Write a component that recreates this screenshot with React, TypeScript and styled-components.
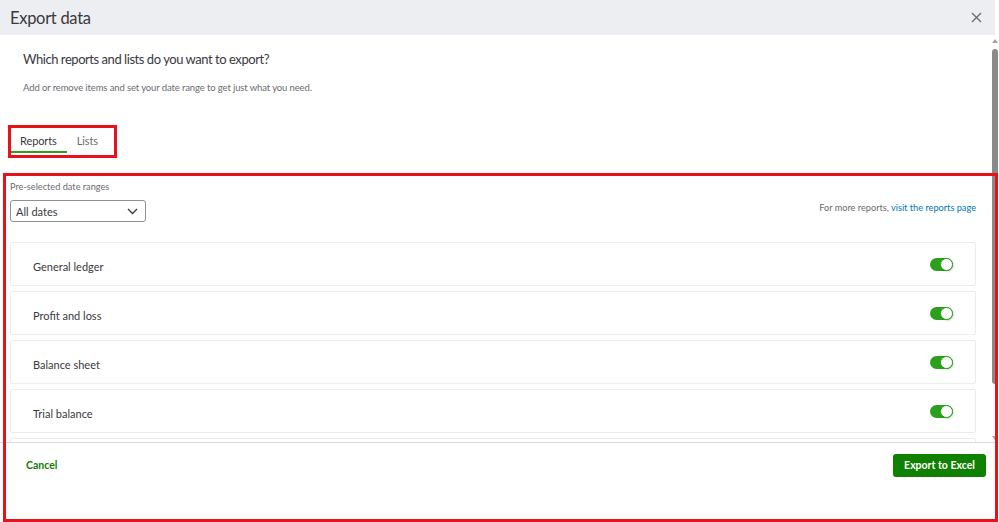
import React from "react";
import styled, { createGlobalStyle } from "styled-components";

const Global = createGlobalStyle`
  html, body { margin: 0; padding: 0; background: #ffffff; }
  body { font-family: "Lato", "Open Sans", sans-serif; color: #393a3d; }
  * { box-sizing: border-box; }
`;

const Page = styled.div`
  position: relative;
  width: 999px;
  height: 522px;
  display: flex;
  flex-direction: column;
  overflow: hidden;
  background: #ffffff;
`;

const Header = styled.header`
  height: 35px;
  flex: none;
  display: flex;
  align-items: center;
  justify-content: space-between;
  padding: 0 12px 0 10px;
  margin-right: 4px;
  background: #eceef1;
`;

const Title = styled.h1`
  margin: 0;
  font-size: 16.5px;
  font-weight: 400;
  color: #393a3d;
  letter-spacing: -0.3px;
`;

const CloseButton = styled.button`
  border: 0;
  background: transparent;
  padding: 0;
  width: 14px;
  height: 14px;
  display: flex;
  align-items: center;
  justify-content: center;
`;

const Body = styled.div`
  flex: 1;
  min-height: 0;
  display: flex;
`;

const Scroller = styled.div`
  flex: 1;
  min-width: 0;
  overflow: hidden;
  padding: 0 14px 0 10px;
`;

const Track = styled.div`
  width: 9px;
  flex: none;
  display: flex;
  flex-direction: column;
  align-items: center;
  padding: 4px 0 2px;
  background: #ffffff;
`;

const Arrow = styled.div<{ $down?: boolean }>`
  width: 0;
  height: 0;
  border-left: 3px solid transparent;
  border-right: 3px solid transparent;
  ${(p) =>
    p.$down
      ? "border-top: 4px solid #a3a3a3;"
      : "border-bottom: 4px solid #a3a3a3;"}
`;

const Thumb = styled.div`
  width: 6px;
  height: 335px;
  margin: 6px 0 auto;
  border-radius: 3px;
  background: #8a8a8a;
`;

const Intro = styled.div`
  padding: 14px 0 0 13px;
`;

const Question = styled.h2`
  margin: 0;
  font-size: 13px;
  line-height: 20px;
  font-weight: 400;
  letter-spacing: -0.45px;
  color: #393a3d;
`;

const Hint = styled.p`
  margin: 12px 0 0;
  font-size: 9.5px;
  line-height: 14px;
  letter-spacing: -0.12px;
  color: #6b6c72;
`;

const Tabs = styled.div`
  display: flex;
  margin-top: 35px;
  height: 23px;
`;

const Tab = styled.div<{ $active?: boolean }>`
  padding: 3px 10px 0;
  font-size: 11px;
  line-height: 16px;
  letter-spacing: -0.1px;
  color: ${(p) => (p.$active ? "#393a3d" : "#6b6c72")};
  border-bottom: 2px solid ${(p) => (p.$active ? "#2ca01c" : "transparent")};
`;

const FilterRow = styled.div`
  display: flex;
  justify-content: space-between;
  align-items: flex-end;
  margin-top: 28px;
`;

const Field = styled.div`
  display: flex;
  flex-direction: column;
  gap: 7px;
`;

const FieldLabel = styled.label`
  font-size: 9.2px;
  line-height: 12px;
  color: #6b6c72;
`;

const Select = styled.div`
  width: 136px;
  height: 22px;
  border: 1px solid #8d9096;
  border-radius: 3px;
  display: flex;
  align-items: center;
  justify-content: space-between;
  padding: 0 7px 0 5px;
  font-size: 11px;
  color: #393a3d;
`;

const MoreNote = styled.div`
  font-size: 9.2px;
  color: #6b6c72;
  margin-bottom: 9px;
`;

const Link = styled.a`
  color: #0077c5;
  text-decoration: none;
`;

const List = styled.div`
  display: flex;
  flex-direction: column;
  gap: 5px;
  margin-top: 20px;
`;

const Row = styled.div`
  height: 44px;
  flex: none;
  border: 1px solid #ececec;
  border-radius: 2px;
  display: flex;
  align-items: center;
  justify-content: space-between;
  padding: 4px 22px 0 22px;
  font-size: 11px;
  color: #393a3d;
`;

const Switch = styled.div<{ $on?: boolean }>`
  width: 23px;
  height: 13px;
  border-radius: 7px;
  background: ${(p) => (p.$on ? "#2ca01c" : "#babec5")};
  display: flex;
  justify-content: ${(p) => (p.$on ? "flex-end" : "flex-start")};
  align-items: center;
  margin-top: -3px;
`;

const Knob = styled.span`
  width: 13px;
  height: 13px;
  border-radius: 50%;
  background: #ffffff;
  border: 1px solid #2ca01c;
  box-shadow: 1px 1px 2px rgba(0, 0, 0, 0.15);
`;

const Footer = styled.footer`
  height: 80px;
  flex: none;
  border-top: 1px solid #dcdcdc;
  display: flex;
  align-items: center;
  justify-content: space-between;
  padding: 0 13px 35px 26px;
`;

const Cancel = styled.a`
  display: inline-block;
  padding: 2px 0;
  line-height: 16px;
  font-size: 10.5px;
  font-weight: 700;
  color: #108000;
  text-decoration: none;
  cursor: pointer;
`;

const Primary = styled.button`
  height: 23px;
  width: 93px;
  border: 0;
  border-radius: 3px;
  padding: 0;
  line-height: 23px;
  background: #108000;
  color: #ffffff;
  font-family: inherit;
  font-size: 10.5px;
  font-weight: 700;
`;

const Callout = styled.div<{ $x: number; $y: number; $w: number; $h: number }>`
  position: absolute;
  left: ${(p) => p.$x}px;
  top: ${(p) => p.$y}px;
  width: ${(p) => p.$w}px;
  height: ${(p) => p.$h}px;
  border: 3px solid #e8121a;
  pointer-events: none;
`;

const reports = ["General ledger", "Profit and loss", "Balance sheet", "Trial balance", "Journal"];

export default function App() {
  return (
    <Page>
      <Global />
      <Header>
        <Title>Export data</Title>
        <CloseButton aria-label="Close">
          <svg width="11" height="11" viewBox="0 0 11 11">
            <path d="M1 1 L10 10 M10 1 L1 10" stroke="#6b6c72" strokeWidth="1.4" />
          </svg>
        </CloseButton>
      </Header>
      <Body>
        <Scroller>
          <Intro>
            <Question>Which reports and lists do you want to export?</Question>
            <Hint>Add or remove items and set your date range to get just what you need.</Hint>
          </Intro>
          <Tabs>
            <Tab $active>Reports</Tab>
            <Tab>Lists</Tab>
          </Tabs>
          <FilterRow>
            <Field>
              <FieldLabel>Pre-selected date ranges</FieldLabel>
              <Select>
                <span>All dates</span>
                <svg width="11" height="7" viewBox="0 0 11 7">
                  <path d="M1 1 L5.5 5.5 L10 1" fill="none" stroke="#393a3d" strokeWidth="1.3" />
                </svg>
              </Select>
            </Field>
            <MoreNote>
              For more reports, <Link href="#">visit the reports page</Link>
            </MoreNote>
          </FilterRow>
          <List>
            {reports.map((r) => (
              <Row key={r}>
                <span>{r}</span>
                <Switch $on>
                  <Knob />
                </Switch>
              </Row>
            ))}
          </List>
        </Scroller>
        <Track>
          <Arrow />
          <Thumb />
          <Arrow $down />
        </Track>
      </Body>
      <Footer>
        <Cancel role="button">Cancel</Cancel>
        <Primary>Export to Excel</Primary>
      </Footer>
      <Callout $x={8} $y={125} $w={109} $h={33} />
      <Callout $x={3} $y={173} $w={995} $h={349} />
    </Page>
  );
}
